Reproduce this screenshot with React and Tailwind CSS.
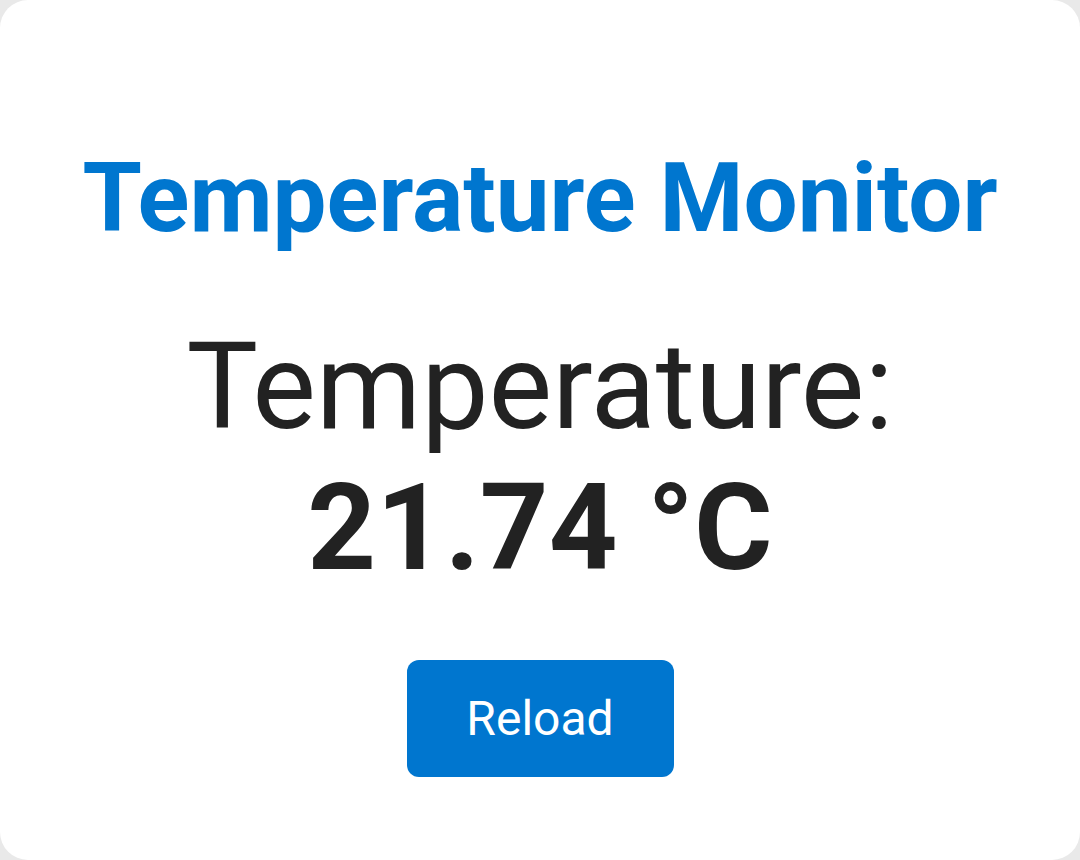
const App = () => {
  return (
    <div className="w-[1080px] h-[860px] bg-[#e9e9e9]" style={{ fontFamily: "Roboto, 'Noto Sans', sans-serif" }}>
      <div className="w-full h-full bg-white rounded-[28px] flex flex-col items-center pt-[141px]">
        <h1 className="text-[96px] leading-[115px] font-bold text-[#0076cf]">Temperature Monitor</h1>
        <div className="mt-[61px] flex flex-col items-center text-[120px] leading-[141px] text-[#222222]">
          <span>Temperature:</span>
          <span className="font-bold">21.74 °C</span>
        </div>
        <button className="mt-[61px] w-[267px] h-[117px] rounded-[12px] bg-[#0076cf] text-white text-[48px]">
          Reload
        </button>
      </div>
    </div>
  );
};

export default App;
